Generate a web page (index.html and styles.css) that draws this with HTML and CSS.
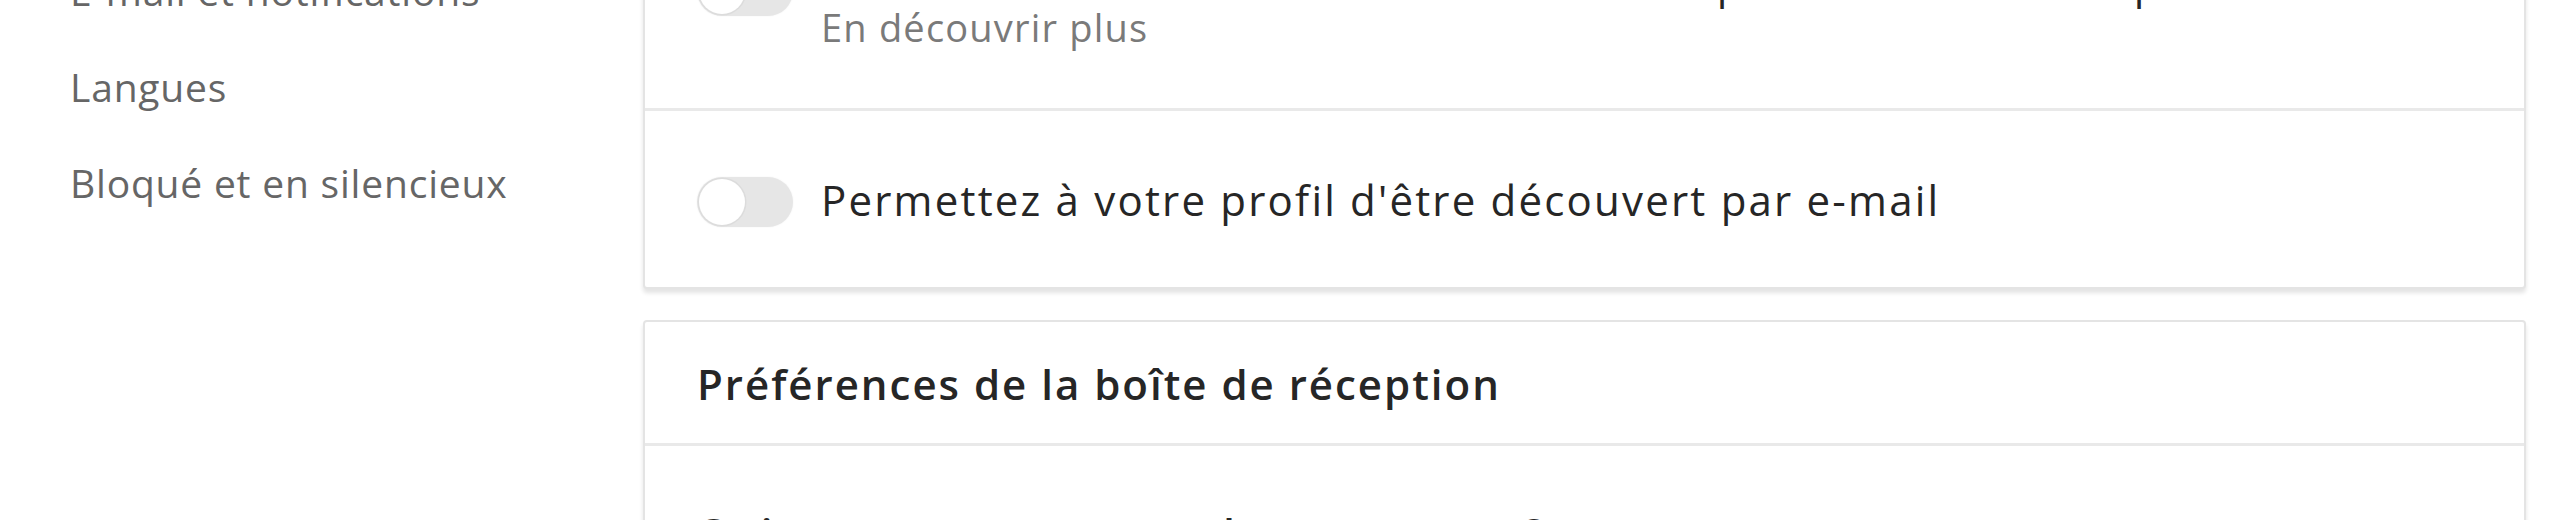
FILE: index.html
```html
<!DOCTYPE html>
<html lang="fr">
<head>
<meta charset="utf-8">
<title>Paramètres</title>
<link rel="stylesheet" href="styles.css">
</head>
<body>
<div class="layout">
  <nav class="sidebar">
    <a class="nav-item">E-mail et notifications</a>
    <a class="nav-item">Langues</a>
    <a class="nav-item">Bloqué et en silencieux</a>
  </nav>
  <main class="main">
    <section class="card">
      <div class="row row-first">
        <span class="toggle toggle-first"><span class="knob"></span></span>
        <div class="row-text">
          <p class="label label-tight">Permettez aux membres de vous trouver par numéro de téléphone</p>
          <p class="sub">En découvrir plus</p>
        </div>
      </div>
      <div class="row row-second">
        <span class="toggle"><span class="knob"></span></span>
        <div class="row-text">
          <p class="label">Permettez à votre profil d'être découvert par e-mail</p>
        </div>
      </div>
    </section>
    <section class="card card-inbox">
      <header class="card-header">
        <h3 class="card-title">Préférences de la boîte de réception</h3>
      </header>
      <div class="row row-question">
        <p class="card-title">Qui peut vous envoyer des messages ?</p>
      </div>
    </section>
  </main>
</div>
</body>
</html>
```
FILE: styles.css
```css
html, body {
  margin: 0;
  padding: 0;
  background: #ffffff;
}

body {
  font-family: "Open Sans", "Noto Sans", sans-serif;
  height: 520px;
  overflow: hidden;
}

p, h3 {
  margin: 0;
}

.layout {
  display: flex;
  align-items: flex-start;
}

.sidebar {
  width: 643px;
  flex-shrink: 0;
  box-sizing: border-box;
  padding-left: 70px;
  margin-top: -57.5px;
  display: flex;
  flex-direction: column;
}

.nav-item {
  font-size: 39px;
  line-height: 96px;
  color: #666666;
  letter-spacing: 0.8px;
  white-space: nowrap;
}

.main {
  flex: 1;
  min-width: 0;
  margin-right: 34px;
  margin-top: -96.5px;
}

.card {
  background: #ffffff;
  border: 2px solid #e4e4e4;
  border-radius: 4px;
  box-shadow: 0 4px 4px rgba(0, 0, 0, 0.11);
}

.card-inbox {
  margin-top: 31px;
}

.row {
  display: flex;
  align-items: flex-start;
  gap: 28px;
  padding-left: 52px;
  padding-right: 52px;
}

.row-first {
  padding-top: 56.5px;
  padding-bottom: 59.5px;
  border-bottom: 3px solid #e9e9e9;
}

.row-second {
  padding-top: 59.7px;
  padding-bottom: 58.3px;
}

.row-question {
  padding-top: 59px;
  padding-bottom: 60px;
}

.toggle {
  flex-shrink: 0;
  width: 96px;
  height: 50px;
  margin-top: 6px;
  border-radius: 25px;
  background: #e6e6e6;
  box-sizing: border-box;
  padding: 2px;
  display: flex;
  align-items: center;
  box-shadow: 0 0 2px rgba(0, 0, 0, 0.06);
}

.toggle-first {
  margin-top: 3.5px;
}

.knob {
  width: 46px;
  height: 46px;
  border-radius: 50%;
  background: #ffffff;
  box-shadow: 0 0 0 1.5px #dcdcdc;
}

.row-text {
  display: flex;
  flex-direction: column;
}

.label {
  font-size: 42px;
  line-height: 58px;
  letter-spacing: 2.2px;
  color: #262626;
  white-space: nowrap;
}

.label-tight {
  line-height: 42.5px;
}

.sub {
  font-size: 38px;
  line-height: 44px;
  letter-spacing: 1.2px;
  color: #7a7a7a;
  white-space: nowrap;
}

.card-header {
  padding: 33.7px 52px 31.3px;
  border-bottom: 3px solid #e9e9e9;
}

.card-title {
  font-size: 42px;
  line-height: 56px;
  font-weight: 600;
  letter-spacing: 2px;
  color: #262626;
  white-space: nowrap;
}
```
